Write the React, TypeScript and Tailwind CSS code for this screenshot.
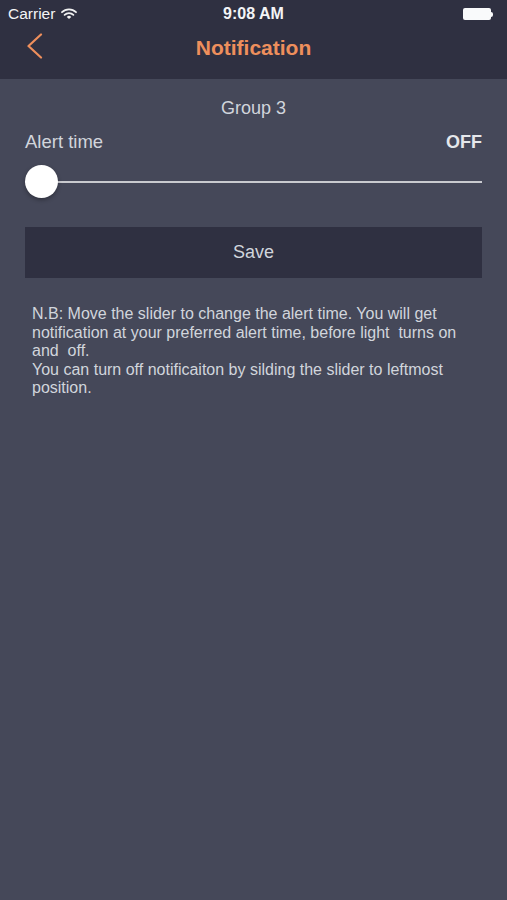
import React from 'react';

const font = { fontFamily: '"Liberation Sans", Arial, sans-serif' };

const StatusBar = () => (
  <div className="relative h-[28px] flex items-center px-2 text-[15.5px] text-gray-100">
    <div className="flex items-center gap-1">
      <span>Carrier</span>
      <svg width="16" height="12" viewBox="0 0 16 12" className="ml-0.5">
        <path d="M1 4.2 A10 10 0 0 1 15 4.2" stroke="#f1f1f1" strokeWidth="1.8" fill="none" strokeLinecap="round" />
        <path d="M3.6 6.8 A6.4 6.4 0 0 1 12.4 6.8" stroke="#f1f1f1" strokeWidth="1.8" fill="none" strokeLinecap="round" />
        <path d="M8 11 L5.8 8.9 A3.1 3.1 0 0 1 10.2 8.9 Z" fill="#f1f1f1" />
      </svg>
    </div>
    <span className="absolute left-1/2 -translate-x-1/2 font-semibold text-[16px]">9:08 AM</span>
    <div className="ml-auto flex items-center mr-[6px]">
      <div className="w-[28px] h-[12px] rounded-[2px] bg-gray-50" />
      <div className="w-[2px] h-[5px] bg-gray-50 rounded-r-sm" />
    </div>
  </div>
);

const NavBar = () => (
  <div className="relative h-[51px] flex items-center justify-center">
    <svg width="17" height="26" viewBox="0 0 17 26" className="absolute left-[26px] top-[5px]">
      <path d="M15 1.5 L2.5 13 L15 24.5" stroke="#ee8f5c" strokeWidth="2.2" fill="none" strokeLinecap="round" strokeLinejoin="round" />
    </svg>
    <h1 className="text-[21px] font-bold text-[#ee8f5c] -mt-[12px]">Notification</h1>
  </div>
);

export default function App() {
  return (
    <div className="w-[507px] h-[900px] bg-[#454859] flex flex-col" style={font}>
      <div className="bg-[#2f3041]">
        <StatusBar />
        <NavBar />
      </div>
      <div className="px-[25px] flex flex-col">
        <p className="text-center text-[18px] text-gray-300 mt-[18px] leading-[22px]">Group 3</p>
        <div className="flex items-center justify-between mt-[12px] text-[18.5px] leading-[22px]">
          <span className="text-gray-300">Alert time</span>
          <span className="font-bold text-gray-200 text-[18px]">OFF</span>
        </div>
        <div className="relative h-[34px] mt-[12px] flex items-center">
          <div className="w-full h-[2px] bg-[#c9cacf]" />
          <div className="absolute left-0 top-0 w-[33px] h-[33px] rounded-full bg-white shadow-[0_2px_4px_rgba(0,0,0,0.3)]" />
        </div>
        <button className="mt-[28px] h-[51px] bg-[#2f3041] text-[18px] text-gray-300">Save</button>
        <div className="mt-[27px] px-[7px] text-[16px] leading-[18.6px] text-gray-300">
          N.B: Move the slider to change the alert time. You will get
          <br />
          notification at your preferred alert time, before light&nbsp; turns on
          <br />
          and&nbsp; off.
          <br />
          You can turn off notificaiton by silding the slider to leftmost
          <br />
          position.
        </div>
      </div>
    </div>
  );
}
